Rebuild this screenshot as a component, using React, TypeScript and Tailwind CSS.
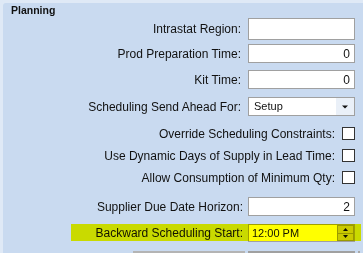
import React from 'react'

function TextBox({ value = '', h = 'h-[19px]' }: { value?: string; h?: string }) {
  return (
    <div
      className={`${h} w-[107px] ml-[7px] bg-white border border-[#a0a0a0] flex items-center justify-end pr-[4px] text-[12px] leading-none text-[#111]`}
    >
      {value}
    </div>
  )
}

function Label({ text, w = 'w-[238px]' }: { text: string; w?: string }) {
  return <div className={`${w} shrink-0 text-right text-[12px] leading-[14px] text-[#111] whitespace-nowrap`}>{text}</div>
}

function CheckRow({ text, mt }: { text: string; mt: string }) {
  return (
    <div className={`flex items-center h-[13px] ${mt}`}>
      <Label text={text} w="w-[332px]" />
      <div className="ml-[7px] w-[13px] h-[13px] bg-white border border-[#333]" />
    </div>
  )
}

export default function App() {
  return (
    <div
      className="relative w-[363px] h-[253px] overflow-hidden bg-[#dfe9f6]"
      style={{ fontFamily: '"Liberation Sans", Arial, sans-serif' }}
    >
      <div className="ml-[3px] mt-[3px] h-[250px] bg-[#c9daf0] rounded-tl-[3px] flex flex-col">
        <div className="mt-[1px] h-[12px] pl-[8px] text-[10.5px] leading-[12px] font-bold text-[#111]">Planning</div>

        {/* Intrastat */}
        <div className="flex items-center h-[22px] mt-[2px]">
          <Label text="Intrastat Region:" />
          <TextBox h="h-[22px]" />
        </div>

        <div className="flex items-center h-[19px] mt-[4px]">
          <Label text="Prod Preparation Time:" />
          <TextBox value="0" />
        </div>

        <div className="flex items-center h-[19px] mt-[7px]">
          <Label text="Kit Time:" />
          <TextBox value="0" />
        </div>

        <div className="flex items-center h-[19px] mt-[8px]">
          <Label text="Scheduling Send Ahead For:" />
          <div className="h-[19px] w-[107px] ml-[7px] bg-white border border-[#a0a0a0] flex items-center">
            <span className="flex-1 pl-[5px] text-[11px] leading-none text-[#111]">Setup</span>
            <div className="w-[18px] h-full bg-[#eaf0f8] flex items-center justify-center">
              <svg width="6" height="4" viewBox="0 0 6 4">
                <path d="M0 0.5 H6 L3 3.5 Z" fill="#111" />
              </svg>
            </div>
          </div>
        </div>

        <CheckRow text="Override Scheduling Constraints:" mt="mt-[11px]" />
        <CheckRow text="Use Dynamic Days of Supply in Lead Time:" mt="mt-[9px]" />
        <CheckRow text="Allow Consumption of Minimum Qty:" mt="mt-[9px]" />

        <div className="flex items-center h-[19px] mt-[13px]">
          <Label text="Supplier Due Date Horizon:" w="w-[240px]" />
          <div className="ml-[-2px]">
            <TextBox value="2" />
          </div>
        </div>

        <div className="flex items-center h-[18px] mt-[8px]">
          <Label text="Backward Scheduling Start:" w="w-[240px]" />
          <div className="h-[18px] w-[107px] ml-[5px] bg-white border border-[#a0a0a0] flex items-center">
            <span className="flex-1 pl-[3px] text-[11px] leading-none text-[#111]">12:00 PM</span>
            <div className="w-[17px] h-full flex flex-col">
              <div className="flex-1 bg-[#cacaca] border border-[#9a9a9a] flex items-center justify-center">
                <svg width="5" height="3" viewBox="0 0 5 3">
                  <path d="M0 3 H5 L2.5 0 Z" fill="#111" />
                </svg>
              </div>
              <div className="flex-1 bg-[#cacaca] border border-t-0 border-[#9a9a9a] flex items-center justify-center">
                <svg width="5" height="3" viewBox="0 0 5 3">
                  <path d="M0 0 H5 L2.5 3 Z" fill="#111" />
                </svg>
              </div>
            </div>
          </div>
        </div>

        <div className="flex h-[20px] mt-[9px]">
          <div className="ml-[130px] w-[112px] h-full bg-[#b4b4b4]" />
          <div className="ml-[3px] w-[107px] h-full bg-white border border-[#a0a0a0]" />
          <div className="ml-[3px] w-[2px] h-full bg-[#a8a8a8]" />
        </div>
      </div>

      {/* marker highlight */}
      <div className="absolute left-[71px] top-[224px] w-[290px] h-[17px] bg-[#ffff00] mix-blend-multiply" />
    </div>
  )
}
